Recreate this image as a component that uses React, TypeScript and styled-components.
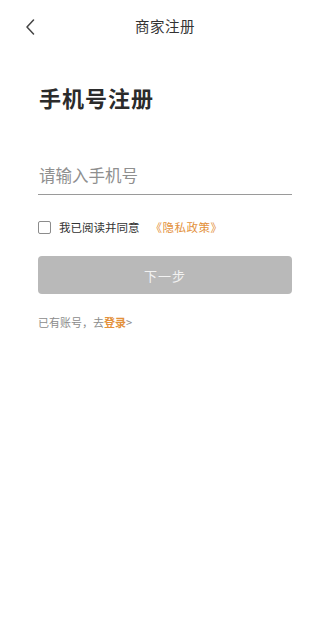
import React from "react";
import styled, { createGlobalStyle } from "styled-components";

const Global = createGlobalStyle`
  html, body { margin: 0; padding: 0; background: #fff; }
  body { font-family: "Noto Sans CJK SC", "Noto Sans", sans-serif; }
  * { box-sizing: border-box; }
`;

const Page = styled.div`
  width: 316px;
  min-height: 634px;
  background: #fff;
  display: flex;
  flex-direction: column;
`;

const NavBar = styled.div`
  height: 50px;
  display: grid;
  grid-template-columns: 50px 1fr 36px;
  align-items: center;
`;

const BackButton = styled.button`
  border: none;
  background: none;
  padding: 3px 0 0 25px;
  height: 50px;
  display: flex;
  align-items: center;
  cursor: pointer;
`;

const NavTitle = styled.div`
  text-align: center;
  font-size: 14.5px;
  color: #333;
  letter-spacing: 0.5px;
`;

const Content = styled.div`
  padding: 0 24px 0 38px;
  display: flex;
  flex-direction: column;
`;

const Heading = styled.h1`
  margin: 32px 0 0 1px;
  font-size: 22px;
  font-weight: 700;
  color: #2b2b2b;
  line-height: 30px;
  letter-spacing: 1px;
`;

const PhoneInput = styled.input`
  margin-top: 46px;
  width: 254px;
  height: 37px;
  border: none;
  border-bottom: 1px solid #9a9a9a;
  outline: none;
  font-family: inherit;
  font-size: 16.5px;
  color: #333;
  padding: 0 0 2px 1px;
  &::placeholder { color: #8f8f8f; }
`;

const AgreeRow = styled.label`
  margin-top: 24px;
  display: flex;
  align-items: center;
  font-size: 11.5px;
  color: #333;
  height: 16px;
`;

const Box = styled.span`
  width: 13px;
  height: 13px;
  border: 1px solid #8c8c8c;
  border-radius: 2px;
  margin-right: 8px;
`;

const Link = styled.span`
  color: #e3913b;
  margin-left: 11px;
  letter-spacing: 0.5px;
`;

const NextButton = styled.button`
  margin-top: 21px;
  width: 254px;
  height: 38px;
  border: none;
  border-radius: 4px;
  background: #b9b9b9;
  color: #f2f2f2;
  font-family: inherit;
  font-size: 13px;
  letter-spacing: 1px;
`;

const LoginHint = styled.div`
  margin-top: 20px;
  font-size: 11px;
  color: #8c8c8c;
`;

const LoginLink = styled.span`
  color: #e3913b;
  font-weight: 700;
`;

const Arrow = styled.span`
  color: #8c8c8c;
`;

export default function App() {
  return (
    <Page>
      <Global />
      <NavBar>
        <BackButton aria-label="back">
          <svg width="10" height="16" viewBox="0 0 10 16">
            <path d="M8.5 1 L2 8 L8.5 15" fill="none" stroke="#444" strokeWidth="1.5" strokeLinecap="round" strokeLinejoin="round" />
          </svg>
        </BackButton>
        <NavTitle>商家注册</NavTitle>
        <div />
      </NavBar>
      <Content>
        <Heading>手机号注册</Heading>
        <PhoneInput placeholder="请输入手机号" />
        <AgreeRow>
          <Box />
          我已阅读并同意
          <Link>《隐私政策》</Link>
        </AgreeRow>
        <NextButton>下一步</NextButton>
        <LoginHint>
          已有账号，去<LoginLink>登录</LoginLink><Arrow>&gt;</Arrow>
        </LoginHint>
      </Content>
    </Page>
  );
}
